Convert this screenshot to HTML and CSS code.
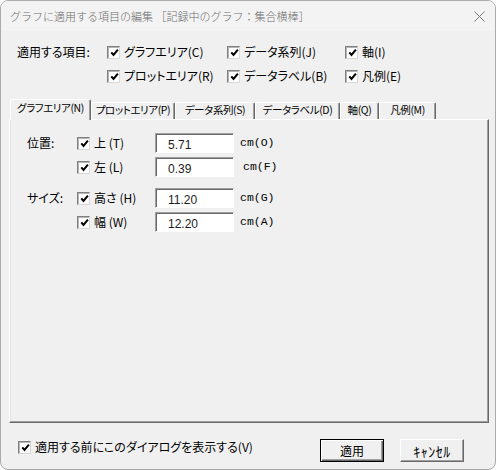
FILE: index.html
```html
<!DOCTYPE html>
<html lang="ja">
<head>
<meta charset="utf-8">
<title>グラフに適用する項目の編集</title>
<link rel="stylesheet" href="styles.css">
</head>
<body>
<div class="window">
  <div class="titlebar">
    <span class="title">グラフに適用する項目の編集 ［記録中のグラフ：集合横棒］</span>
    <svg class="close" width="11" height="11" viewBox="0 0 11 11"><path d="M0.5 0.5 L10.5 10.5 M10.5 0.5 L0.5 10.5" stroke="#7a7a7a" stroke-width="1" fill="none"/></svg>
  </div>

  <div class="body">
    <div class="apply">
      <span class="apply-label">適用する項目:</span>
      <label class="check"><span class="cb"><svg viewBox="0 0 9 9"><path d="M1.3 4.4 L3.5 7 L7.9 1.6" stroke="#000" stroke-width="2" fill="none"/></svg></span>グラフエリア(C)</label>
      <label class="check"><span class="cb"><svg viewBox="0 0 9 9"><path d="M1.3 4.4 L3.5 7 L7.9 1.6" stroke="#000" stroke-width="2" fill="none"/></svg></span>データ系列(J)</label>
      <label class="check"><span class="cb"><svg viewBox="0 0 9 9"><path d="M1.3 4.4 L3.5 7 L7.9 1.6" stroke="#000" stroke-width="2" fill="none"/></svg></span>軸(I)</label>
      <span></span>
      <label class="check"><span class="cb"><svg viewBox="0 0 9 9"><path d="M1.3 4.4 L3.5 7 L7.9 1.6" stroke="#000" stroke-width="2" fill="none"/></svg></span>プロットエリア(R)</label>
      <label class="check"><span class="cb"><svg viewBox="0 0 9 9"><path d="M1.3 4.4 L3.5 7 L7.9 1.6" stroke="#000" stroke-width="2" fill="none"/></svg></span>データラベル(B)</label>
      <label class="check"><span class="cb"><svg viewBox="0 0 9 9"><path d="M1.3 4.4 L3.5 7 L7.9 1.6" stroke="#000" stroke-width="2" fill="none"/></svg></span>凡例(E)</label>
    </div>

    <div class="tabs">
      <div class="tab active">グラフエリア(N)</div>
      <div class="tab">プロットエリア(P)</div>
      <div class="tab">データ系列(S)</div>
      <div class="tab">データラベル(D)</div>
      <div class="tab">軸(Q)</div>
      <div class="tab">凡例(M)</div>
    </div>

    <div class="panel">
      <div class="fields">
        <span class="field-label">位置:</span>
        <label class="check"><span class="cb"><svg viewBox="0 0 9 9"><path d="M1.3 4.4 L3.5 7 L7.9 1.6" stroke="#000" stroke-width="2" fill="none"/></svg></span>上 (T)</label>
        <input class="num" type="text" value="5.71" readonly>
        <span class="unit">cm(O)</span>

        <span></span>
        <label class="check"><span class="cb"><svg viewBox="0 0 9 9"><path d="M1.3 4.4 L3.5 7 L7.9 1.6" stroke="#000" stroke-width="2" fill="none"/></svg></span>左 (L)</label>
        <input class="num" type="text" value="0.39" readonly>
        <span class="unit unit-wide">cm(F)</span>
      </div>
      <div class="fields group">
        <span class="field-label">サイズ:</span>
        <label class="check"><span class="cb"><svg viewBox="0 0 9 9"><path d="M1.3 4.4 L3.5 7 L7.9 1.6" stroke="#000" stroke-width="2" fill="none"/></svg></span>高さ (H)</label>
        <input class="num" type="text" value="11.20" readonly>
        <span class="unit">cm(G)</span>

        <span></span>
        <label class="check"><span class="cb"><svg viewBox="0 0 9 9"><path d="M1.3 4.4 L3.5 7 L7.9 1.6" stroke="#000" stroke-width="2" fill="none"/></svg></span>幅 (W)</label>
        <input class="num" type="text" value="12.20" readonly>
        <span class="unit">cm(A)</span>
      </div>
    </div>
  </div>

  <div class="footer">
    <label class="check show-again"><span class="cb"><svg viewBox="0 0 9 9"><path d="M1.3 4.4 L3.5 7 L7.9 1.6" stroke="#000" stroke-width="2" fill="none"/></svg></span>適用する前にこのダイアログを表示する(V)</label>
    <button class="btn default">適用</button>
    <button class="btn cancel">ｷｬﾝｾﾙ</button>
  </div>
</div>
</body>
</html>
```

FILE: styles.css
```css
html, body {
  margin: 0;
  padding: 0;
  background: #ffffff;
}

body {
  font-family: "Noto Sans CJK JP", "Noto Sans", sans-serif;
  font-size: 12px;
  font-feature-settings: "palt";
  color: #000;
}

.window {
  width: 496px;
  height: 470px;
  box-sizing: border-box;
  border: 1px solid #aaaaaa;
  border-radius: 8px;
  background: #f0f0f0;
  display: flex;
  flex-direction: column;
  overflow: hidden;
}

/* title bar */
.titlebar {
  height: 30px;
  flex: none;
  display: flex;
  align-items: center;
  padding: 0 10px 0 9px;
  background: #f3f3f3;
}

.title {
  flex: 1;
  color: #6d6d6d;
  font-size: 11px;
  line-height: 14px;
  font-weight: 300;
  font-feature-settings: normal;
}

.close {
  display: block;
}

/* main area */
.body {
  flex: 1;
  display: flex;
  flex-direction: column;
  padding: 9px 6px 0 8px;
  min-height: 0;
}

.apply {
  display: grid;
  grid-template-columns: 90px 120px 118px auto;
  grid-auto-rows: 24px;
  align-items: center;
  margin-left: 8px;
}

.apply-label {
  line-height: 14px;
}

/* checkbox + caption */
.check {
  display: flex;
  align-items: center;
  gap: 4px;
  line-height: 14px;
  white-space: nowrap;
}

.cb {
  width: 13px;
  height: 13px;
  box-sizing: border-box;
  flex: none;
  background: #fff;
  border-top: 1px solid #808080;
  border-left: 1px solid #808080;
  border-right: 1px solid #d8d8d8;
  border-bottom: 1px solid #d8d8d8;
  box-shadow: inset 1px 1px #b4b4b4;
  display: flex;
  align-items: center;
  justify-content: center;
  padding: 1px 0 0 1px;
}

.cb svg {
  width: 9px;
  height: 9px;
  display: block;
}

/* tab strip */
.tabs {
  margin-top: 11px;
  margin-left: 1px;
  height: 20px;
  display: grid;
  grid-template-columns: 81px 84px 80px 85px 39px 57px;
  align-items: end;
  position: relative;
  z-index: 1;
}

.tab {
  height: 17px;
  box-sizing: border-box;
  border-top: 1px solid #ffffff;
  border-left: 1px solid #ffffff;
  border-right: 1px solid #696969;
  box-shadow: inset -1px 0 #a0a0a0;
  border-radius: 2px 2px 0 0;
  font-size: 10.5px;
  letter-spacing: -0.4px;
  line-height: 14px;
  text-align: center;
  white-space: nowrap;
  background: #f0f0f0;
}

.tab.active {
  height: 21px;
  margin-bottom: -1px;
  padding-top: 1px;
}

/* tab page */
.panel {
  flex: 1;
  box-sizing: border-box;
  border-top: 1px solid #ffffff;
  border-left: 1px solid #ffffff;
  border-right: 1px solid #696969;
  border-bottom: 1px solid #696969;
  box-shadow: inset -1px -1px #a0a0a0, inset 1px 0 #e3e3e3;
  padding: 13px 0 0 17px;
}

.fields {
  display: grid;
  grid-template-columns: 50px 78px 79px auto;
  grid-auto-rows: 20px;
  row-gap: 4px;
  align-items: center;
}

.fields.group {
  margin-top: 11px;
}

.field-label {
  line-height: 14px;
}

.num {
  width: 79px;
  height: 20px;
  box-sizing: border-box;
  margin: 0;
  padding: 3px 0 0 12px;
  border-top: 1px solid #a0a0a0;
  border-left: 1px solid #a0a0a0;
  border-right: 1px solid #ffffff;
  border-bottom: 1px solid #ffffff;
  box-shadow: inset 1px 1px #696969;
  background: #fff;
  font-family: "Liberation Sans", Arial, sans-serif;
  font-size: 12px;
  color: #1c1c1c;
  outline: none;
}

.unit {
  padding-left: 6px;
  font-family: "Liberation Mono", monospace;
  font-size: 11.5px;
  line-height: 14px;
  margin-top: -1px;
}

.unit.unit-wide {
  padding-left: 9px;
}

/* bottom row */
.footer {
  height: 46px;
  flex: none;
  box-sizing: border-box;
  display: flex;
  align-items: center;
  padding: 9px 31px 0 17px;
  gap: 16px;
}

.show-again {
  margin-right: auto;
  margin-bottom: 7px;
}

.btn {
  width: 64px;
  height: 23px;
  box-sizing: border-box;
  margin: 0;
  padding: 0;
  background: #f0f0f0;
  font-family: "Noto Sans CJK JP", sans-serif;
  font-size: 12px;
  color: #000;
  border-top: 1px solid #ffffff;
  border-left: 1px solid #ffffff;
  border-right: 1px solid #696969;
  border-bottom: 1px solid #696969;
  box-shadow: inset -1px -1px #a0a0a0;
}

.btn.cancel {
  font-size: 14px;
  letter-spacing: 0.5px;
}

.btn.default {
  border: 1px solid #000000;
  box-shadow: inset 1px 1px #ffffff, inset -1px -1px #696969, inset -2px -2px #a0a0a0;
}
```
